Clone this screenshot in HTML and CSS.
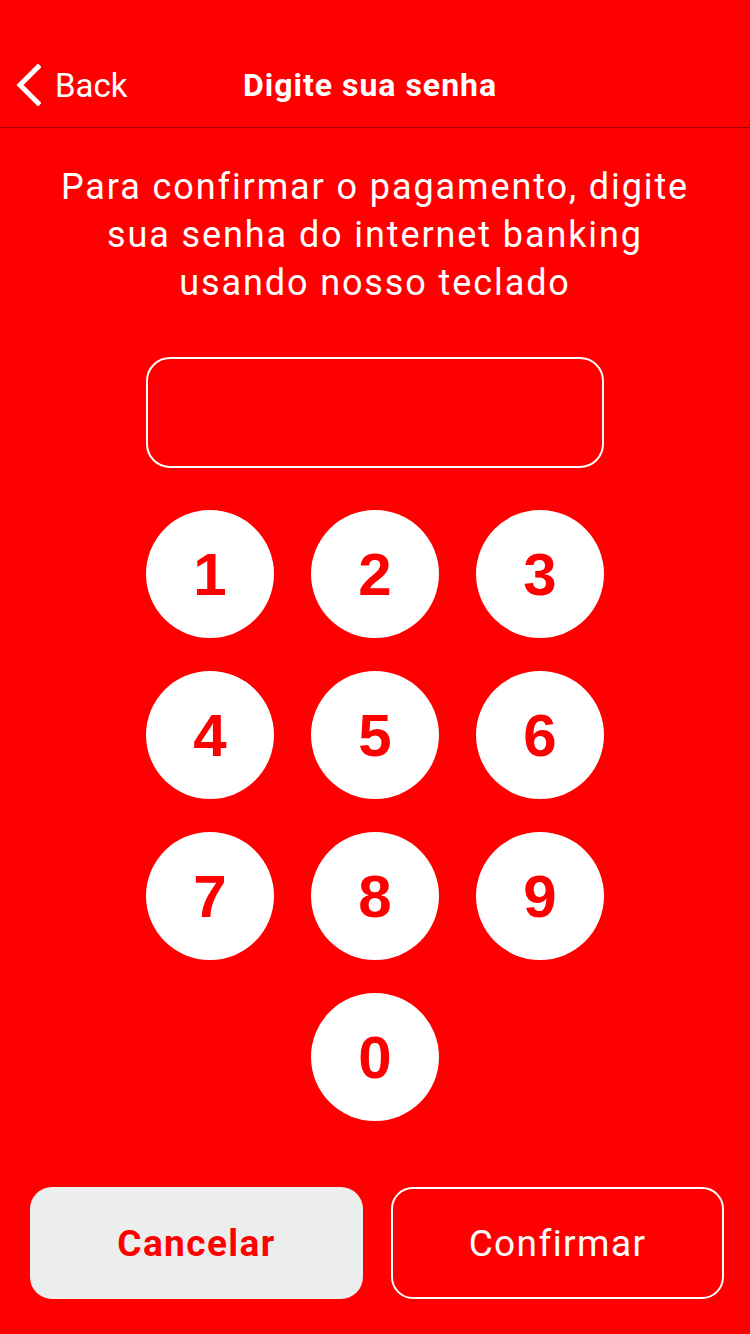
FILE: index.html
```html
<!DOCTYPE html>
<html lang="pt">
<head>
<meta charset="utf-8">
<title>Digite sua senha</title>
<link rel="stylesheet" href="styles.css">
</head>
<body>
<div class="screen">
  <header class="nav">
    <div class="nav-back">
      <svg class="chevron" width="26" height="42" viewBox="0 0 26 42"><path d="M23 3 L5 21 L23 39" fill="none" stroke="#fff" stroke-width="5" stroke-linecap="square"/></svg>
      <span class="back-label">Back</span>
    </div>
    <h1 class="nav-title">Digite sua senha</h1>
    <div class="nav-spacer"></div>
  </header>
  <p class="intro">Para confirmar o pagamento, digite<br>sua senha do internet banking<br>usando nosso teclado</p>
  <div class="pin-box"></div>
  <div class="keypad">
    <button class="key">1</button>
    <button class="key">2</button>
    <button class="key">3</button>
    <button class="key">4</button>
    <button class="key">5</button>
    <button class="key">6</button>
    <button class="key">7</button>
    <button class="key">8</button>
    <button class="key">9</button>
    <button class="key key-zero">0</button>
  </div>
  <div class="actions">
    <button class="btn btn-cancel">Cancelar</button>
    <button class="btn btn-confirm">Confirmar</button>
  </div>
</div>
</body>
</html>
```
FILE: styles.css
```css
html, body {
  margin: 0;
  padding: 0;
  background: #ff0000;
}
.screen {
  width: 750px;
  height: 1334px;
  background: #ff0000;
  color: #fff;
  font-family: Roboto, "Liberation Sans", sans-serif;
  display: flex;
  flex-direction: column;
  overflow: hidden;
}
.nav {
  box-sizing: border-box;
  height: 128px;
  padding-top: 43px;
  padding-right: 10px;
  border-bottom: 1px solid #a30000;
  display: grid;
  grid-template-columns: 1fr auto 1fr;
  align-items: center;
}
.nav-back {
  display: flex;
  align-items: center;
  padding-left: 15px;
  gap: 14px;
}
.chevron {
  display: block;
}
.back-label {
  font-size: 33px;
  font-weight: 400;
  letter-spacing: 0;
}
.nav-title {
  margin: 0;
  font-size: 32px;
  font-weight: 700;
  letter-spacing: 1px;
}
.intro {
  margin: 35px 0 0;
  text-align: center;
  font-size: 36px;
  line-height: 48px;
  letter-spacing: 1.9px;
}
.pin-box {
  box-sizing: border-box;
  width: 458px;
  height: 111px;
  margin: 50px auto 0;
  border: 2px solid #fff;
  border-radius: 24px;
}
.keypad {
  margin: 42px auto 0;
  display: grid;
  grid-template-columns: repeat(3, 128px);
  grid-auto-rows: 128px;
  column-gap: 37px;
  row-gap: 33px;
}
.key {
  width: 128px;
  height: 128px;
  border: none;
  border-radius: 50%;
  background: #fff;
  color: #ff0000;
  font-family: "Liberation Sans", Arial, sans-serif;
  font-size: 60px;
  font-weight: 700;
  padding: 0;
}
.key-zero {
  grid-column: 2;
}
.actions {
  margin-top: 66px;
  padding-left: 30px;
  display: flex;
  gap: 28px;
}
.btn {
  box-sizing: border-box;
  flex: none;
  width: 333px;
  height: 112px;
  border-radius: 22px;
  font-family: Roboto, "Liberation Sans", sans-serif;
  font-size: 37px;
  letter-spacing: 1.4px;
  padding: 0;
  margin: 0;
}
.btn-cancel {
  background: #eceeed;
  border: none;
  color: #ff0000;
  font-weight: 700;
}
.btn-confirm {
  background: transparent;
  border: 2px solid #fff;
  color: #fff;
  font-weight: 400;
}
```
